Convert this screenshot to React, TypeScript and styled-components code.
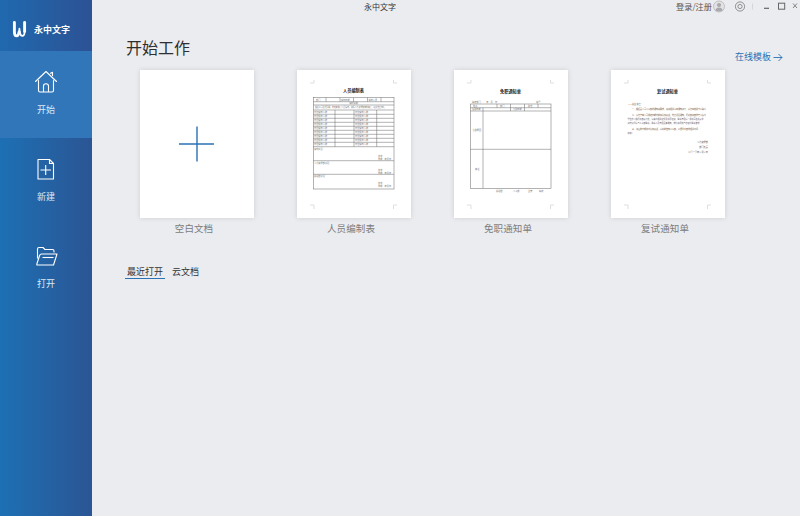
import React from "react";
import styled, { createGlobalStyle } from "styled-components";

const Global = createGlobalStyle`
  html, body { margin: 0; padding: 0; background: #ebecf0; }
  #root { width: 800px; height: 516px; overflow: hidden; }
  * { box-sizing: border-box; }
`;

const Page = styled.div`
  display: flex;
  width: 800px;
  height: 516px;
  background: #ebecf0;
  font-family: "Noto Sans CJK SC", "Liberation Sans", sans-serif;
`;
const Sidebar = styled.aside`
  width: 92px;
  flex: none;
  display: flex;
  flex-direction: column;
  background: linear-gradient(90deg, #1d70b4 0%, #2b5594 100%);
`;
const Logo = styled.div`
  height: 51px;
  display: flex;
  align-items: center;
  gap: 7px;
  padding: 7px 0 0 12px;
  background: linear-gradient(90deg, #2069af 0%, #2c5294 100%);
  color: #fff;
  font-size: 9px;
  font-weight: 700;
`;
const NavItem = styled.div<{ $active?: boolean }>`
  height: 87px;
  padding-top: 19px;
  display: flex;
  flex-direction: column;
  align-items: center;
  gap: 10px;
  background: ${(p) => (p.$active ? "#3276ba" : "transparent")};
  color: #dfe9f4;
  font-size: 9px;
  line-height: 12px;
`;
const Main = styled.main`
  flex: 1;
  display: flex;
  flex-direction: column;
`;
const TitleBar = styled.header`
  height: 13px;
  display: flex;
  align-items: center;
  padding-left: 272px;
  color: #333;
  font-size: 8px;
  line-height: 13px;
`;
const WindowTitle = styled.span`
  width: 36px;
  margin-right: 276px;
  white-space: nowrap;
`;
const Account = styled.div`
  display: flex;
  align-items: center;
  width: 50px;
  flex: none;
  color: #555;
  font-size: 8.2px;
  white-space: nowrap;
`;
const WindowControls = styled.div`
  display: flex;
  align-items: center;
  margin-left: 2px;
`;
const HeaderRow = styled.div`
  height: 57px;
  display: flex;
  justify-content: space-between;
  padding: 25px 17px 0 34px;
`;
const Heading = styled.h1`
  margin: -1px 0 0;
  font-size: 16px;
  line-height: 20px;
  font-weight: 400;
  color: #2f2f2f;
`;
const TemplateLink = styled.a`
  display: flex;
  align-items: center;
  gap: 2px;
  height: 12px;
  margin-top: 13px;
  color: #2a70b3;
  font-size: 9px;
  line-height: 12px;
`;
const Cards = styled.section`
  display: flex;
  gap: 43px;
  padding-left: 48px;
`;
const Card = styled.figure`
  width: 114px;
  margin: 0;
  display: flex;
  flex-direction: column;
  align-items: center;
  gap: 4px;
`;
const Sheet = styled.div`
  width: 114px;
  height: 148px;
  background: #fff;
  box-shadow: 0 0 5px rgba(0, 0, 0, 0.13);
  display: flex;
`;
const CardLabel = styled.figcaption`
  margin-right: 6px;
  font-size: 9.5px;
  line-height: 12px;
  color: #7c7c7c;
  letter-spacing: 0.1px;
`;
const Tabs = styled.nav`
  display: flex;
  gap: 5px;
  margin: 30px 0 0 33px;
`;
const Tab = styled.span<{ $active?: boolean }>`
  padding: 2px 2px 0 2px;
  font-size: 9px;
  line-height: 12px;
  color: #333;
  border-bottom: 1.5px solid ${(p) => (p.$active ? "#2a72b5" : "transparent")};
`;

const ink = "#666";
const Crops = () => (
  <g stroke="#c9c9c9" strokeWidth="0.6" fill="none">
    <path d="M13 13H17V10" />
    <path d="M96.5 10V13H100" />
    <path d="M13 135H17V139" />
    <path d="M100 135H96.5V139" />
  </g>
);
const T = ({ x, y, s = 2.2, w, a, c = "#777", children }: { x: number; y: number; s?: number; w?: number; a?: "middle" | "end"; c?: string; children: React.ReactNode }) => (
  <text x={x} y={y} fontSize={s} fontWeight={w} textAnchor={a} fill={c}>{children}</text>
);
const DocSvg = ({ children }: { children: React.ReactNode }) => (
  <svg width="114" height="148" viewBox="0 0 114 148" fontFamily='"Noto Sans CJK SC", sans-serif'>
    <Crops />
    {children}
  </svg>
);

const rowYs = [40, 44.3, 48.3, 52.3, 56.3, 60.3, 64.3, 68.3, 72.3, 76.7];
const rowLabels = ["岗位编制人数", "岗位现有人数"];
const RosterDoc = () => (
  <DocSvg>
    <T x={56.5} y={22} s={4.2} w={700} a="middle" c="#222">人员编制表</T>
    <g stroke={ink} strokeWidth="0.5" fill="none">
      <rect x="16.3" y="27.7" width="80.7" height="91.3" />
      {[31.7, 35, ...rowYs, 90.7, 104.3].map((y) => <path key={y} d={`M16.3 ${y}H97`} />)}
      {[29, 43, 56.5, 70.5, 84].map((x) => <path key={x} d={`M${x} 27.7V31.7`} />)}
      {[38, 57, 79.7].map((x) => <path key={x} d={`M${x} 40V76.7`} />)}
    </g>
    <T x={19} y={30.5}>部门</T>
    <T x={44} y={30.5}>编制日期</T>
    <T x={71.5} y={30.5}>编制人员</T>
    <T x={56.5} y={34.3} a="middle">编制说明</T>
    <T x={18} y={37.6} s={1.9}>根据公司发展需要，制定本部门人员编制，并报人力资源部审核备案，经批准后执行</T>
    {rowYs.slice(0, -1).map((y, i) => (
      <g key={y}>
        <T x={17} y={y + 2.9}>{rowLabels[i % 2]}</T>
        <T x={58} y={y + 2.9}>{rowLabels[i % 2]}</T>
      </g>
    ))}
    <T x={17} y={79.5}>编制意见：</T>
    <T x={17} y={93.5}>人力资源部意见：</T>
    <T x={17} y={107}>总经理意见：</T>
    {[86.5, 100.5, 114].map((y) => (
      <g key={y}>
        <T x={81} y={y}>签字：</T>
        <T x={81} y={y + 3.2}>日期：年月日</T>
      </g>
    ))}
  </DocSvg>
);
const DismissDoc = () => (
  <DocSvg>
    <T x={56.5} y={23} s={4.2} w={700} a="middle" c="#222">免职通知单</T>
    <T x={18} y={33}>填表部门：　　年　月　日</T>
    <T x={82} y={33}>编号：</T>
    <g stroke={ink} strokeWidth="0.5" fill="none">
      <rect x="16.3" y="34" width="80.7" height="84.3" />
      <path d="M16.3 37.7H97M16.3 41H97M16.3 79.3H97" />
      <path d="M29 37.7V118.3M43 34V37.7M56.5 34V41M70.5 34V41M84 34V37.7" />
    </g>
    <T x={19} y={36.6}>姓名</T>
    <T x={46} y={36.6}>部门</T>
    <T x={74} y={36.6}>职位</T>
    <T x={18} y={40}>任职日期</T>
    <T x={59} y={40}>免职日期</T>
    <T x={18.5} y={61}>免职原因</T>
    <T x={21} y={99.5}>备注</T>
    <T x={42} y={122}>总经理：</T>
    <T x={59} y={122}>人事部：</T>
    <T x={74} y={122}>主管：</T>
    <T x={85} y={122}>填表：</T>
  </DocSvg>
);
const letterLines: [number, number, string][] = [
  [34.5, 17, "××先生/女士："],
  [40, 21, "一、根据贵公司人事部的通知和要求，现将相关事宜通知如下，请您查收并予以确认"],
  [45.7, 21, "二、请您于本公司规定日期内前来参加复试，地点详见通知，行政部将安排专人接待"],
  [49.7, 16.5, "单位办公楼行政部接待处，请携带相关证件及学历证明，联系电话请一并填写在此表中"],
  [54.4, 16.5, "如有疑问请与人事部联系，联系人及电话见本通知，我们将尽快与您取得联系安排"],
  [59.7, 21, "三、如因故不能按时参加复试，请提前告知人事部，以便重新安排相关时间"],
  [64.4, 16.5, "谢谢！"],
];
const RetestDoc = () => (
  <DocSvg>
    <T x={56.5} y={23} s={4.2} w={700} a="middle" c="#222">复试通知单</T>
    {letterLines.map(([y, x, t]) => <T key={y} x={x} y={y} s={2} c="#555">{t}</T>)}
    <T x={97} y={73} a="end" c="#555">人力资源部</T>
    <T x={97} y={77.7} a="end" c="#555">部门负责</T>
    <T x={97} y={83} a="end" c="#555">二〇一〇年×月×日</T>
  </DocSvg>
);

const LogoMark = () => (
  <svg width="15" height="18" viewBox="0 0 15 18" fill="none" stroke="#fff" strokeLinecap="round" strokeLinejoin="round">
    <path strokeWidth="2.9" d="M2.4 2.5V11.5C2.4 14.6 3.4 15.9 4.6 15.9C5.9 15.9 6.7 14.6 7.1 12" />
    <path strokeWidth="1.7" d="M7.1 12L7.4 8.5L7.8 12C8.2 14.6 9 15.9 10.2 15.9C11.6 15.9 12.6 14.6 12.6 11.5" />
    <path strokeWidth="2.9" d="M12.6 11.5V2.5" />
  </svg>
);
const HomeIcon = () => (
  <svg width="24" height="24" viewBox="0 0 24 24" fill="none" stroke="#fff" strokeWidth="1.1" strokeLinecap="round" strokeLinejoin="round">
    <path d="M1.5 11.5L12 1.5L22.5 11.5" />
    <path d="M16.5 3.2L18.5 2.2V5.5" />
    <path d="M4.5 10.5V20.5C4.5 21.5 5 22 6 22H18C19 22 19.5 21.5 19.5 20.5V10.5" />
    <path d="M9.5 21.5V16C9.5 14.5 10.5 13.8 12 13.8C13.5 13.8 14.5 14.5 14.5 16V21.5" />
  </svg>
);
const NewIcon = () => (
  <svg width="24" height="24" viewBox="0 0 24 24" fill="none" stroke="#fff" strokeWidth="1.1" strokeLinejoin="round">
    <path d="M4 2.5H15.5L19.5 6.5V22H4Z" />
    <path d="M15.5 2.5V6.5H19.5" />
    <path d="M6.5 13H17M11.7 8V18" />
  </svg>
);
const OpenIcon = () => (
  <svg width="24" height="24" viewBox="0 0 24 24" fill="none" stroke="#fff" strokeWidth="1.1" strokeLinejoin="round">
    <path d="M3.5 14.5V5C3.5 4 4 3.5 5 3.5H9L11 5.5H18.5C19.5 5.5 20 6 20 7V8.5" />
    <path d="M3 21H19.5L23 10H7.5C6.5 10 6 10.4 5.6 11.5L3 19.5C2.7 20.5 2.8 21 3 21Z" />
    <path d="M8.5 13.5H19.5" />
  </svg>
);
const PlusIcon = () => (
  <svg width="114" height="148" viewBox="0 0 114 148" fill="none" stroke="#2a72b5" strokeWidth="1.4">
    <path d="M39 74H74M57 56.5V91.5" />
  </svg>
);
const Avatar = () => (
  <svg width="14" height="13" viewBox="0 0 14 13">
    <circle cx="7" cy="6.5" r="5.5" fill="#e3e3e6" stroke="#b5b5b8" strokeWidth="0.8" />
    <circle cx="7" cy="5" r="2.1" fill="#a9a9ad" />
    <path d="M3.4 10.5C3.8 8.4 5 7.6 7 7.6C9 7.6 10.2 8.4 10.6 10.5C9.6 11.4 4.4 11.4 3.4 10.5Z" fill="#a9a9ad" />
  </svg>
);
const Controls = () => (
  <svg width="70" height="13" viewBox="0 0 70 13" fill="none" stroke="#777">
    <circle cx="12" cy="6.5" r="4.6" strokeWidth="0.8" />
    <circle cx="12" cy="6.5" r="2.1" strokeWidth="0.8" />
    <path d="M24.5 3.5V9.5" stroke="#d0d0d3" strokeWidth="0.8" />
    <path d="M36 8.3H41" strokeWidth="1.2" stroke="#666" />
    <rect x="50.5" y="3.2" width="6.2" height="6" strokeWidth="1" stroke="#666" />
    <path d="M65 3.5L69 8M69 3.5L65 8" strokeWidth="0.9" />
  </svg>
);
const ArrowRight = () => (
  <svg width="10" height="9" viewBox="0 0 10 9" fill="none" stroke="#2a70b3" strokeWidth="0.9">
    <path d="M0.5 4.5H9M5.5 1L9 4.5L5.5 8" />
  </svg>
);

const templates = [
  { label: "人员编制表", Doc: RosterDoc },
  { label: "免职通知单", Doc: DismissDoc },
  { label: "复试通知单", Doc: RetestDoc },
];

export default function App() {
  return (
    <Page>
      <Global />
      <Sidebar>
        <Logo>
          <LogoMark />
          <span>永中文字</span>
        </Logo>
        <NavItem $active>
          <HomeIcon />
          <span>开始</span>
        </NavItem>
        <NavItem>
          <NewIcon />
          <span>新建</span>
        </NavItem>
        <NavItem>
          <OpenIcon />
          <span>打开</span>
        </NavItem>
      </Sidebar>
      <Main>
        <TitleBar>
          <WindowTitle>永中文字</WindowTitle>
          <Account>
            <span>登录/注册</span>
            <Avatar />
          </Account>
          <WindowControls>
            <Controls />
          </WindowControls>
        </TitleBar>
        <HeaderRow>
          <Heading>开始工作</Heading>
          <TemplateLink>
            在线模板
            <ArrowRight />
          </TemplateLink>
        </HeaderRow>
        <Cards>
          <Card>
            <Sheet>
              <PlusIcon />
            </Sheet>
            <CardLabel>空白文档</CardLabel>
          </Card>
          {templates.map(({ label, Doc }) => (
            <Card key={label}>
              <Sheet>
                <Doc />
              </Sheet>
              <CardLabel>{label}</CardLabel>
            </Card>
          ))}
        </Cards>
        <Tabs>
          <Tab $active>最近打开</Tab>
          <Tab>云文档</Tab>
        </Tabs>
      </Main>
    </Page>
  );
}
